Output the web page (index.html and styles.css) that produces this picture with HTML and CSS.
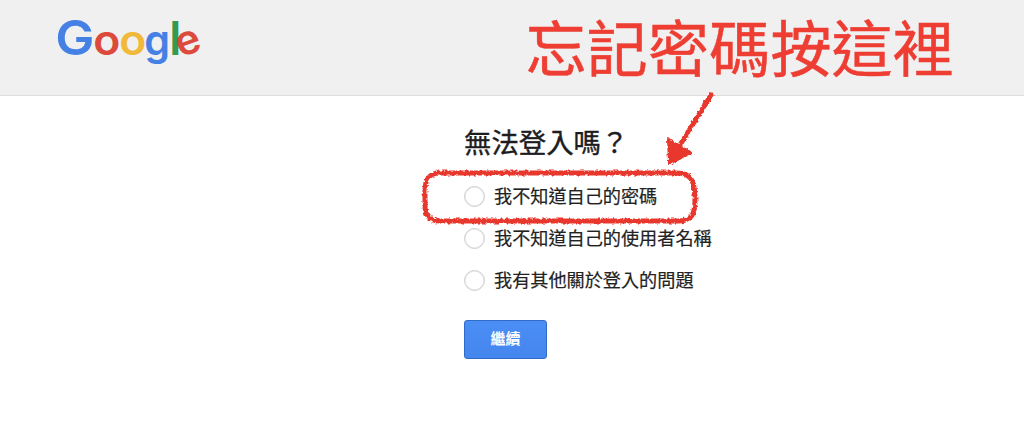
FILE: index.html
```html
<!DOCTYPE html>
<html lang="zh-Hant">
<head>
<meta charset="utf-8">
<title>無法登入嗎？</title>
<link rel="stylesheet" href="styles.css">
</head>
<body>
<header class="header">
  <svg class="logo" width="170" height="90" viewBox="50 0 170 90" role="img" aria-label="Google">
    <text class="blue" transform="translate(55.3 55.3) scale(1.08 1)" font-size="48.500">G</text>
    <text class="red" transform="translate(93.3 55.4) scale(1.06 1)" font-size="42">o</text>
    <text class="yellow" transform="translate(119.2 55.4) scale(1.06 1)" font-size="42">o</text>
    <text class="blue" transform="translate(144.2 55.2) scale(0.97 1)" font-size="42.500">g</text>
    <text class="green" x="169.200" y="55.2" font-size="46">l</text>
    <text class="red" transform="translate(180.6 57.8) rotate(-20)" font-size="41.500">e</text>
  </svg>
  <p class="callout">忘記密碼按這裡</p>
</header>
<main class="content">
  <h1 class="title">無法登入嗎？</h1>
  <form class="form">
    <label class="option"><input class="radio" type="radio" name="reason"><span class="label">我不知道自己的密碼</span></label>
    <label class="option"><input class="radio" type="radio" name="reason"><span class="label">我不知道自己的使用者名稱</span></label>
    <label class="option"><input class="radio" type="radio" name="reason"><span class="label">我有其他關於登入的問題</span></label>
    <button class="submit" type="button">繼續</button>
  </form>
</main>
<svg class="marks" width="1024" height="421" viewBox="0 0 1024 421" aria-hidden="true">
  <defs>
    <filter id="chalk" filterUnits="userSpaceOnUse" x="410" y="80" width="320" height="160">
      <feTurbulence type="fractalNoise" baseFrequency="0.35" numOctaves="2" seed="4" result="n"/>
      <feDisplacementMap in="SourceGraphic" in2="n" scale="4" xChannelSelector="R" yChannelSelector="G"/>
    </filter>
  </defs>
  <g filter="url(#chalk)">
    <path class="stroke" d="M695 195 C694 181 691 173 677 173 H440 C428 173 425 180 425 191 V205 C425 216 429 221 440 221 H679 C692 221 695 214 695 199"/>
    <path class="stroke arrow-line" d="M711 95 L680 145"/>
    <path class="arrow-head" d="M668 139 L691.500 153 L669 164 Z"/>
  </g>
</svg>
</body>
</html>
```
FILE: styles.css
```css
body {
  margin: 0;
  height: 421px;
  position: relative;
  overflow: hidden;
  background: #fff;
  color: #222;
  font-family: "Noto Sans CJK TC", sans-serif;
}

.header {
  box-sizing: border-box;
  height: 96px;
  display: flex;
  justify-content: space-between;
  align-items: flex-start;
  padding: 0 70px 0 50px;
  background: #f0f0f0;
  border-bottom: 1px solid #dedede;
}

.logo text {
  font-family: Inter, sans-serif;
  font-weight: 600;
}

.blue { fill: #4580e4; }
.red { fill: #dc4a3c; }
.yellow { fill: #f0b93a; }
.green { fill: #329a52; }

.callout {
  margin: 0;
  padding-top: 1px;
  font-size: 61px;
  line-height: 90px;
  letter-spacing: 0.2px;
  color: #ee3d32;
  -webkit-text-stroke: 0.5px #ee3d32;
  white-space: nowrap;
}

.content {
  padding: 25px 0 0 464px;
}

.title {
  margin: 0;
  font-size: 27.4px;
  line-height: 40px;
  font-weight: 400;
  color: #1d1d1f;
  -webkit-text-stroke: 0.4px #1d1d1f;
}

.form {
  display: flex;
  flex-direction: column;
  align-items: flex-start;
  padding-top: 14px;
}

.option {
  display: flex;
  align-items: center;
  gap: 9px;
  height: 42px;
  font-size: 18.15px;
  white-space: nowrap;
}

.label {
  padding-bottom: 3px;
  -webkit-text-stroke: 0.2px #222;
}

.radio {
  appearance: none;
  box-sizing: border-box;
  width: 21px;
  height: 21px;
  margin: 0;
  border: 1px solid #cfcfcf;
  box-shadow: inset 0 0 0 0.5px #dcdcdc;
  border-radius: 50%;
  background: #fff;
}

.submit {
  width: 83px;
  height: 39px;
  margin-top: 19px;
  padding: 0 0 4px;
  border: 1px solid #2f6cc8;
  border-radius: 3px;
  background: linear-gradient(#4a8ef6, #4585ee);
  color: #fff;
  font: 700 15px "Noto Sans CJK TC", sans-serif;
}

.marks {
  position: absolute;
  top: 0;
  left: 0;
  pointer-events: none;
}

.stroke {
  fill: none;
  stroke: #e8392f;
  stroke-width: 5;
  stroke-linecap: round;
}

.arrow-head {
  fill: #e8392f;
  stroke: #e8392f;
  stroke-width: 2;
  stroke-linejoin: round;
}
```
